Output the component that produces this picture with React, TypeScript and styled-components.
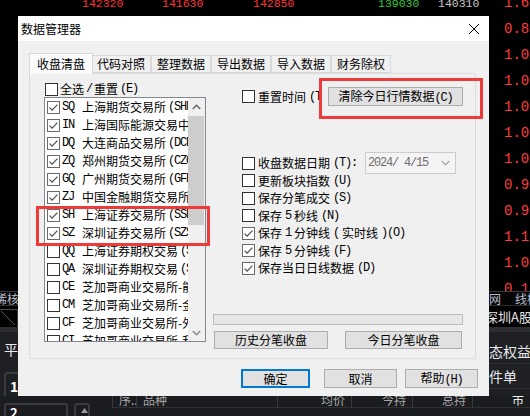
import React from "react";
import styled, { createGlobalStyle } from "styled-components";

const CJK = `"Noto Sans CJK SC", "Noto Sans", sans-serif`;
const MONO = `"Liberation Mono", "DejaVu Sans Mono", monospace`;

const GlobalStyle = createGlobalStyle`
  body {
    margin: 0;
    background: #000;
    font-family: ${CJK};
  }
  * {
    box-sizing: border-box;
  }
`;

const Page = styled.div`
  position: relative;
  width: 530px;
  height: 416px;
  overflow: hidden;
  background: #000;
`;

/* ---------- trading screen behind the dialog ---------- */

const Backdrop = styled.div`
  display: grid;
  grid-template-columns: 489px 41px;
  grid-template-rows: 291px 14px 22px 69px 20px;
  width: 530px;
  height: 416px;
  font-family: ${CJK};
`;

const Board = styled.div`
  overflow: hidden;
  background: #000;
`;

const QuoteRow = styled.div`
  display: grid;
  grid-template-columns: 80px 91px 125px 60px 1fr;
  padding-left: 82px;
  margin-top: -3px;
  height: 14px;
  line-height: 14px;
  font-family: ${MONO};
  font-size: 11.5px;
`;

const Quote = styled.span<{ $tone: "up" | "down" | "flat" }>`
  color: ${(p) => (p.$tone === "up" ? "#ff3434" : p.$tone === "down" ? "#35c935" : "#c8c8c8")};
`;

const PriceColumn = styled.div`
  overflow: hidden;
  display: flex;
  flex-direction: column;
  padding-left: 15px;
`;

const Price = styled.span`
  flex: none;
  height: 26px;
  line-height: 26px;
  font-family: ${MONO};
  font-size: 14px;
  color: #ff3c3c;
  &:first-child {
    margin-top: -10px;
  }
`;

const MenuStrip = styled.div`
  display: flex;
  align-items: center;
  gap: 14px;
  border-top: 1px solid #3c3c3c;
  background: #050505;
  color: #b8bccb;
  font-size: 12px;
  white-space: nowrap;
  overflow: hidden;
`;

const MarketRow = styled.div`
  display: flex;
  align-items: center;
  border-top: 1px solid #2e2e2e;
  background: #000;
  color: #e4e4e4;
  font-size: 13px;
  white-space: nowrap;
  overflow: hidden;
`;

const AccountPane = styled.div`
  display: flex;
  flex-direction: column;
  border-top: 5px solid #2c2d31;
  background: #1f2023;
  color: #e8e8ee;
  font-size: 14px;
  white-space: nowrap;
  overflow: visible;
`;

const PaneLine = styled.div<{ $top: number }>`
  margin-top: ${(p) => p.$top}px;
  height: 16px;
  line-height: 16px;
  padding-left: 4px;
`;

const SlotBox = styled.div`
  margin: 15px 0 0 4px;
  width: 64px;
  height: 28px;
  border: 2px solid #3a3b40;
  border-radius: 4px;
  padding-left: 4px;
  line-height: 24px;
  font-weight: bold;
  color: #fff;
`;

const AccountLabel = styled.div`
  height: 25px;
  line-height: 25px;
  border-bottom: 1px solid #2e2f33;
`;

const ColumnHeader = styled.div`
  grid-column: 1 / -1;
  display: flex;
  background: #1b1c1f;
  overflow: hidden;
`;

const HeaderLead = styled.div`
  width: 112px;
  display: flex;
  align-items: flex-start;
  gap: 6px;
  padding: 7px 0 0 4px;
  flex: none;
`;

const SmallBox = styled.div<{ $w: number }>`
  width: ${(p) => p.$w}px;
  height: 20px;
  border: 2px solid #3a3b40;
  border-radius: 3px;
  color: #fff;
  font-size: 13px;
  font-weight: bold;
  padding-left: 4px;
  line-height: 16px;
  display: flex;
  justify-content: ${(p) => (p.$w < 30 ? "center" : "flex-start")};
`;

const HeaderCell = styled.div<{ $w: number; $align: "left" | "right"; $bright?: boolean }>`
  width: ${(p) => p.$w}px;
  flex: none;
  height: 12px;
  border-left: 1px solid #3a3a3a;
  border-bottom: 1px solid #303033;
  padding: 0 6px;
  text-align: ${(p) => p.$align};
  color: ${(p) => (p.$bright ? "#f0f0f0" : "#a8a8a8")};
  font-size: 12px;
  line-height: 8px;
  white-space: nowrap;
`;

/* ---------- dialog ---------- */

const Dialog = styled.section`
  position: absolute;
  left: 18px;
  top: 16px;
  width: 471px;
  height: 380px;
  display: flex;
  flex-direction: column;
  background: #f0f0f0;
  font-family: ${CJK};
  font-size: 12px;
  color: #000;
`;

const TitleBar = styled.header`
  flex: none;
  height: 25px;
  display: flex;
  align-items: center;
  justify-content: space-between;
  padding: 0 10px 0 3px;
  background: #fff;
  font-size: 12px;
  line-height: 1;
`;

const Body = styled.div`
  flex: 1;
  display: flex;
  flex-direction: column;
  padding: 12px 13px 0 11px;
`;

const TabRow = styled.div`
  display: flex;
  align-items: flex-end;
  height: 20px;
  padding-left: 2px;
`;

const Tab = styled.div<{ $active?: boolean }>`
  position: relative;
  z-index: ${(p) => (p.$active ? 1 : 0)};
  width: ${(p) => (p.$active ? 64 : 60)}px;
  height: ${(p) => (p.$active ? 21 : 18)}px;
  margin: ${(p) => (p.$active ? "0 -2px -1px" : "0")};
  display: flex;
  align-items: center;
  justify-content: center;
  border: 1px solid #d9d9d9;
  border-bottom: ${(p) => (p.$active ? "none" : "1px solid #d9d9d9")};
  background: ${(p) => (p.$active ? "#fbfbfb" : "#f0f0f0")};
  font-size: 12px;
  line-height: 1;
`;

const TabPanel = styled.div`
  height: 286px;
  border: 1px solid #dcdcdc;
  display: grid;
  grid-template-columns: 162px 250px;
  column-gap: 7px;
  padding-left: 14px;
  align-items: start;
`;

const LeftColumn = styled.div`
  display: flex;
  flex-direction: column;
  padding-top: 8px;
`;

const RightColumn = styled.div`
  display: flex;
  flex-direction: column;
`;

const Latin = styled.span`
  font-family: ${MONO};
  font-size: 12px;
  letter-spacing: -1.2px;
`;

const Mixed = ({ text }: { text: string }) => (
  <>
    {text
      .split(/([\x20-\x7e]+)/)
      .filter(Boolean)
      .map((part, i) =>
        /^[\x20-\x7e]+$/.test(part) ? <Latin key={i}>{part}</Latin> : <span key={i}>{part}</span>
      )}
  </>
);

const Box = styled.span<{ $checked?: boolean }>`
  flex: none;
  width: 13px;
  height: 13px;
  display: inline-flex;
  align-items: center;
  justify-content: center;
  border: 1px solid ${(p) => (p.$checked ? "#6a6a6a" : "#333")};
  background: #fff;
`;

const CheckBox = ({ checked }: { checked?: boolean }) => (
  <Box $checked={checked}>
    {checked && (
      <svg width="11" height="11" viewBox="0 0 11 11">
        <polyline points="1.6,5.6 4.1,8.1 9.4,2.6" fill="none" stroke="#4c4c4c" strokeWidth="1.2" />
      </svg>
    )}
  </Box>
);

const SelectAll = styled.label`
  display: flex;
  align-items: center;
  gap: 2px;
  height: 14px;
  padding-left: 1px;
  white-space: nowrap;
  line-height: 1;
`;

const ListBox = styled.div`
  margin-top: 1px;
  height: 245px;
  display: flex;
  border: 1px solid #828790;
  background: #fff;
  overflow: hidden;
`;

const ListItems = styled.div`
  flex: 1;
  min-width: 0;
  overflow: hidden;
  padding-left: 2px;
`;

const ListRow = styled.div`
  display: flex;
  align-items: center;
  gap: 2px;
  height: 18px;
  white-space: nowrap;
  line-height: 1;
`;

const Code = styled(Latin)`
  width: 18px;
  flex: none;
`;

const ScrollBar = styled.div`
  flex: none;
  width: 17px;
  display: flex;
  flex-direction: column;
  background: #f0f0f0;
`;

const ScrollArrow = styled.div`
  height: 17px;
  display: flex;
  align-items: center;
  justify-content: center;
`;

const ScrollThumb = styled.div`
  margin: 1px 1px 0 0;
  height: 109px;
  background: #cdcdcd;
`;

const ScrollSpace = styled.div`
  flex: 1;
`;

const TopLine = styled.div`
  margin-top: 13px;
  height: 19px;
  display: flex;
  align-items: center;
`;

const ClippedCheck = styled.label`
  width: 107px;
  overflow: hidden;
  display: flex;
  align-items: center;
  gap: 3px;
  padding-left: 29px;
  white-space: nowrap;
  line-height: 1;
`;

const Button = styled.button<{ $w: number; $h?: number; $default?: boolean }>`
  flex: none;
  width: ${(p) => p.$w}px;
  height: ${(p) => p.$h ?? 19}px;
  padding: 0;
  border: ${(p) => (p.$default ? "2px solid #0078d7" : "1px solid #adadad")};
  background: #e1e1e1;
  font-family: ${CJK};
  font-size: 12px;
  line-height: 1;
  color: #000;
`;

const CheckList = styled.div`
  margin-top: 48.5px;
  display: flex;
  flex-direction: column;
  padding-left: 29px;
`;

const CheckRow = styled.label`
  height: 17.5px;
  display: flex;
  align-items: center;
  gap: 3px;
  white-space: nowrap;
  line-height: 1;
`;

const DateBox = styled.div`
  margin-left: 5px;
  width: 91px;
  height: 22px;
  flex: none;
  display: flex;
  align-items: center;
  justify-content: space-between;
  padding: 0 5px 0 2px;
  border: 1px solid #cccccc;
  background: #f4f4f4;
  color: #6d6d6d;
`;

const Progress = styled.div`
  margin-top: 37px;
  height: 11px;
  border: 1px solid #bcbcbc;
  background: #e6e6e6;
`;

const SplitRow = styled.div`
  margin-top: 6px;
  display: flex;
  gap: 17px;
  padding-left: 1px;
`;

const Footer = styled.div`
  margin-top: 10px;
  display: flex;
  gap: 14px;
  padding-left: 212px;
  & > :last-child {
    margin-left: -6px;
  }
`;

const Marker = styled.div<{ $x: number; $y: number; $w: number; $h: number }>`
  position: absolute;
  left: ${(p) => p.$x}px;
  top: ${(p) => p.$y}px;
  width: ${(p) => p.$w}px;
  height: ${(p) => p.$h}px;
  border: 3px solid #ef3a3a;
  pointer-events: none;
`;

const tabs = ["收盘清盘", "代码对照", "整理数据", "导出数据", "导入数据", "财务除权"];

const exchanges: [string, string, string, boolean][] = [
  ["SQ", "上海期货交易所", "SHFE", true],
  ["IN", "上海国际能源交易中心", "INE", true],
  ["DQ", "大连商品交易所", "DCE", true],
  ["ZQ", "郑州期货交易所", "CZCE", true],
  ["GQ", "广州期货交易所", "GFEX", true],
  ["ZJ", "中国金融期货交易所", "CFFEX", true],
  ["SH", "上海证券交易所", "SSE", true],
  ["SZ", "深圳证券交易所", "SZSE", true],
  ["QQ", "上海证券期权交易", "SSE", false],
  ["QA", "深圳证券期权交易", "SZSE", false],
  ["CE", "芝加哥商业交易所-能源", "CME", false],
  ["CM", "芝加哥商业交易所-金属", "CME", false],
  ["CF", "芝加哥商业交易所-外汇", "CME", false],
  ["CI", "芝加哥商业交易所-利率", "CME", false],
];

const saveOptions: [string, boolean][] = [
  ["更新板块指数(U)", false],
  ["保存分笔成交(S)", false],
  ["保存5秒线(N)", false],
  ["保存1分钟线(实时线)(O)", true],
  ["保存5分钟线(F)", true],
  ["保存当日日线数据(D)", true],
];

const prices = ["1.61", "0.80", "1.06", "1.02", "1.05", "1.08", "1.02", "0.98", "0.90", "1.14", "1.05", "0.15"];

const Chevron = ({ dir, color }: { dir: "up" | "down"; color: string }) => (
  <svg width="9" height="6" viewBox="0 0 9 6">
    <polyline
      points={dir === "up" ? "0.8,5 4.5,1.3 8.2,5" : "0.8,1 4.5,4.7 8.2,1"}
      fill="none"
      stroke={color}
      strokeWidth="1.4"
    />
  </svg>
);

export default function App() {
  return (
    <Page>
      <GlobalStyle />
      <Backdrop>
        <Board>
          <QuoteRow>
            <Quote $tone="up">142320</Quote>
            <Quote $tone="up">141630</Quote>
            <Quote $tone="up">142850</Quote>
            <Quote $tone="down">139030</Quote>
            <Quote $tone="flat">140310</Quote>
          </QuoteRow>
        </Board>
        <PriceColumn>
          {prices.map((p, i) => (
            <Price key={i}>{p}</Price>
          ))}
        </PriceColumn>

        <MenuStrip>
          <span style={{ marginLeft: -5 }}>稀核</span>
        </MenuStrip>
        <MenuStrip>
          <span>网</span>
          <span>线柜</span>
        </MenuStrip>

        <MarketRow>
          <svg width="19" height="22" viewBox="0 0 19 22">
            <line x1="0" y1="3.5" x2="18" y2="3.5" stroke="#4a4a4a" />
            <line x1="1" y1="5" x2="15" y2="19" stroke="#5a5a5a" />
            <line x1="17.5" y1="3" x2="17.5" y2="22" stroke="#3a3a3a" />
          </svg>
        </MarketRow>
        <MarketRow>
          <span style={{ marginLeft: -4 }}>深圳A股</span>
        </MarketRow>

        <AccountPane>
          <PaneLine $top={9}>平</PaneLine>
          <SlotBox>1.</SlotBox>
        </AccountPane>
        <AccountPane>
          <AccountLabel style={{ marginTop: 7 }}>态权益:</AccountLabel>
          <AccountLabel>件单</AccountLabel>
        </AccountPane>

        <ColumnHeader>
          <HeaderLead>
            <SmallBox $w={64}>2</SmallBox>
            <SmallBox $w={16}>
              <svg width="7" height="5" viewBox="0 0 7 5" style={{ marginTop: 3 }}>
                <polygon points="0,5 3.5,0 7,5" fill="#9a9a9a" />
              </svg>
            </SmallBox>
          </HeaderLead>
          <HeaderCell $w={24} $align="left">
            序..
          </HeaderCell>
          <HeaderCell $w={141} $align="left">
            品种
          </HeaderCell>
          <HeaderCell $w={74} $align="right">
            均价
          </HeaderCell>
          <HeaderCell $w={61} $align="right">
            今持
          </HeaderCell>
          <HeaderCell $w={60} $align="right">
            总持
          </HeaderCell>
          <HeaderCell $w={58} $align="right" $bright>
            市
          </HeaderCell>
        </ColumnHeader>
      </Backdrop>

      <Dialog>
        <TitleBar>
          <span>数据管理器</span>
          <svg width="10" height="10" viewBox="0 0 10 10">
            <line x1="0" y1="0" x2="10" y2="10" stroke="#000" strokeWidth="1" />
            <line x1="10" y1="0" x2="0" y2="10" stroke="#000" strokeWidth="1" />
          </svg>
        </TitleBar>
        <Body>
          <TabRow>
            {tabs.map((t, i) => (
              <Tab key={t} $active={i === 0}>
                {t}
              </Tab>
            ))}
          </TabRow>
          <TabPanel>
            <LeftColumn>
              <SelectAll>
                <CheckBox />
                <Mixed text="全选 / 重置(E)" />
              </SelectAll>
              <ListBox>
                <ListItems>
                  {exchanges.map(([code, name, ex, on]) => (
                    <ListRow key={code}>
                      <CheckBox checked={on} />
                      <Code>{code}</Code>
                      <span>{name}</span>
                      <Latin>({ex})</Latin>
                    </ListRow>
                  ))}
                </ListItems>
                <ScrollBar>
                  <ScrollArrow>
                    <Chevron dir="up" color="#606060" />
                  </ScrollArrow>
                  <ScrollThumb />
                  <ScrollSpace />
                  <ScrollArrow>
                    <Chevron dir="down" color="#8a8a8a" />
                  </ScrollArrow>
                </ScrollBar>
              </ListBox>
            </LeftColumn>

            <RightColumn>
              <TopLine>
                <ClippedCheck>
                  <CheckBox />
                  <Mixed text="重置时间(T)" />
                </ClippedCheck>
                <Button $w={135} style={{ marginLeft: 8 }}>
                  <Mixed text="清除今日行情数据(C)" />
                </Button>
              </TopLine>
              <CheckList>
                <CheckRow>
                  <CheckBox />
                  <Mixed text="收盘数据日期(T):" />
                  <DateBox>
                    <Latin>2024/ 4/15</Latin>
                    <Chevron dir="down" color="#a8a8a8" />
                  </DateBox>
                </CheckRow>
                {saveOptions.map(([label, on]) => (
                  <CheckRow key={label}>
                    <CheckBox checked={on} />
                    <Mixed text={label} />
                  </CheckRow>
                ))}
              </CheckList>
              <Progress />
              <SplitRow>
                <Button $w={114} $h={18}>
                  历史分笔收盘
                </Button>
                <Button $w={117} $h={18}>
                  今日分笔收盘
                </Button>
              </SplitRow>
            </RightColumn>
          </TabPanel>
          <Footer>
            <Button $w={69} $default>
              确定
            </Button>
            <Button $w={73}>取消</Button>
            <Button $w={73}>
              <Mixed text="帮助(H)" />
            </Button>
          </Footer>
        </Body>
      </Dialog>

      <Marker $x={319} $y={78} $w={164} $h={41} />
      <Marker $x={36} $y={206} $w={174} $h={40} />
    </Page>
  );
}
